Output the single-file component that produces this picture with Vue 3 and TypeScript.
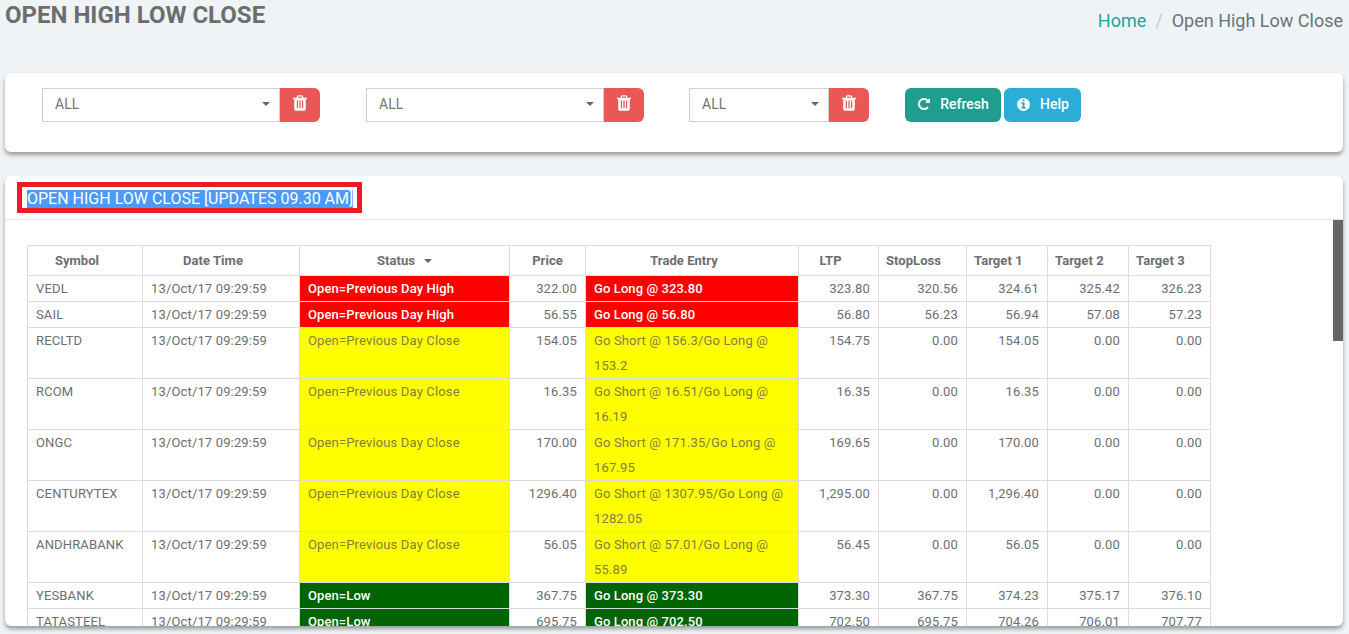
<script setup lang="ts">
interface Row {
  symbol: string
  status: string
  price: string
  entry: string
  ltp: string
  sl: string
  t1: string
  t2: string
  t3: string
  tone: 'red' | 'yellow' | 'green'
}

const time = '13/Oct/17 09:29:59'
const columns = [
  { label: 'Symbol', cls: 'center spare' },
  { label: 'Date Time', cls: 'center spare' },
  { label: 'Status', cls: 'center', sorted: true },
  { label: 'Price', cls: 'center' },
  { label: 'Trade Entry', cls: 'center spare' },
  { label: 'LTP', cls: 'center spare' },
  { label: 'StopLoss', cls: '' },
  { label: 'Target 1', cls: '' },
  { label: 'Target 2', cls: '' },
  { label: 'Target 3', cls: '' },
]
const rows: Row[] = [
  { symbol: 'VEDL', status: 'Open=Previous Day High', price: '322.00', entry: 'Go Long @ 323.80', ltp: '323.80', sl: '320.56', t1: '324.61', t2: '325.42', t3: '326.23', tone: 'red' },
  { symbol: 'SAIL', status: 'Open=Previous Day High', price: '56.55', entry: 'Go Long @ 56.80', ltp: '56.80', sl: '56.23', t1: '56.94', t2: '57.08', t3: '57.23', tone: 'red' },
  { symbol: 'RECLTD', status: 'Open=Previous Day Close', price: '154.05', entry: 'Go Short @ 156.3/Go Long @ 153.2', ltp: '154.75', sl: '0.00', t1: '154.05', t2: '0.00', t3: '0.00', tone: 'yellow' },
  { symbol: 'RCOM', status: 'Open=Previous Day Close', price: '16.35', entry: 'Go Short @ 16.51/Go Long @ 16.19', ltp: '16.35', sl: '0.00', t1: '16.35', t2: '0.00', t3: '0.00', tone: 'yellow' },
  { symbol: 'ONGC', status: 'Open=Previous Day Close', price: '170.00', entry: 'Go Short @ 171.35/Go Long @ 167.95', ltp: '169.65', sl: '0.00', t1: '170.00', t2: '0.00', t3: '0.00', tone: 'yellow' },
  { symbol: 'CENTURYTEX', status: 'Open=Previous Day Close', price: '1296.40', entry: 'Go Short @ 1307.95/Go Long @ 1282.05', ltp: '1,295.00', sl: '0.00', t1: '1,296.40', t2: '0.00', t3: '0.00', tone: 'yellow' },
  { symbol: 'ANDHRABANK', status: 'Open=Previous Day Close', price: '56.05', entry: 'Go Short @ 57.01/Go Long @ 55.89', ltp: '56.45', sl: '0.00', t1: '56.05', t2: '0.00', t3: '0.00', tone: 'yellow' },
  { symbol: 'YESBANK', status: 'Open=Low', price: '367.75', entry: 'Go Long @ 373.30', ltp: '373.30', sl: '367.75', t1: '374.23', t2: '375.17', t3: '376.10', tone: 'green' },
  { symbol: 'TATASTEEL', status: 'Open=Low', price: '695.75', entry: 'Go Long @ 702.50', ltp: '702.50', sl: '695.75', t1: '704.26', t2: '706.01', t3: '707.77', tone: 'green' },
]
const filters = ['wide first', 'wide', 'narrow']
const trash = 'M704 1376v-704q0-14-9-23t-23-9h-64q-14 0-23 9t-9 23v704q0 14 9 23t23 9h64q14 0 23-9t9-23zm256 0v-704q0-14-9-23t-23-9h-64q-14 0-23 9t-9 23v704q0 14 9 23t23 9h64q14 0 23-9t9-23zm256 0v-704q0-14-9-23t-23-9h-64q-14 0-23 9t-9 23v704q0 14 9 23t23 9h64q14 0 23-9t9-23zm-544-992h448l-48-117q-7-9-17-11h-317q-10 2-17 11zm928 32v64q0 14-9 23t-23 9h-96v948q0 83-47 143.500t-113 60.500h-832q-66 0-113-58.500t-47-141.500v-952h-96q-14 0-23-9t-9-23v-64q0-14 9-23t23-9h309l70-167q15-37 54-63t79-26h320q40 0 79 26t54 63l70 167h309q14 0 23 9t9 23z'
</script>

<template>
  <div class="page">
    <header class="top">
      <h1 class="title">OPEN HIGH LOW CLOSE</h1>
      <nav class="crumbs">
        <a class="home">Home</a>
        <span class="sep">/</span>
        <span>Open High Low Close</span>
      </nav>
    </header>

    <section class="card filters">
      <div v-for="(f, i) in filters" :key="i" class="group" :class="f">
        <div class="select">
          <span>ALL</span>
          <i class="caret"></i>
        </div>
        <button class="btn del" type="button" aria-label="Clear">
          <svg viewBox="0 0 1792 1792" width="18" height="18"><path fill="currentColor" :d="trash" /></svg>
        </button>
      </div>
      <div class="actions">
        <button class="btn refresh" type="button">
          <svg viewBox="0 0 1792 1792" width="14" height="14"><path fill="currentColor" d="M1664 256v448q0 26-19 45t-45 19h-448q-42 0-59-40-17-39 14-69l138-138q-148-137-349-137-104 0-198.500 40.500t-163.500 109.500-109.500 163.500-40.500 198.500 40.500 198.500 109.500 163.500 163.500 109.500 198.500 40.500q119 0 225-52t179-147q7-10 23-12 15 0 25 9l137 138q9 8 9.500 20.500t-7.500 22.500q-109 132-264 204.500t-327 72.500q-156 0-298-61t-245-164-164-245-61-298 61-298 164-245 245-164 298-61q147 0 284.500 55.500t244.500 156.500l130-129q29-31 70-14 39 17 39 59z" /></svg>
          Refresh
        </button>
        <button class="btn help" type="button">
          <svg viewBox="0 0 1792 1792" width="15" height="15"><path fill="currentColor" d="M1152 1376v-160q0-14-9-23t-23-9h-96v-512q0-14-9-23t-23-9h-320q-14 0-23 9t-9 23v160q0 14 9 23t23 9h96v320h-96q-14 0-23 9t-9 23v160q0 14 9 23t23 9h448q14 0 23-9t9-23zm-128-896v-160q0-14-9-23t-23-9h-192q-14 0-23 9t-9 23v160q0 14 9 23t23 9h192q14 0 23-9t9-23zm640 416q0 209-103 385.500t-279.500 279.500-385.500 103-385.500-103-279.500-279.500-103-385.500 103-385.500 279.500-279.500 385.500-103 385.500 103 279.500 279.500 103 385.500z" /></svg>
          Help
        </button>
      </div>
    </section>

    <section class="card results">
      <div class="head">
        <div class="marker"><span class="selected">OPEN HIGH LOW CLOSE [UPDATES 09.30 AM]</span></div>
      </div>
      <div class="body">
        <table class="grid">
          <colgroup>
            <col class="c1" /><col class="c2" /><col class="c3" /><col class="c4" /><col class="c5" />
            <col class="c6" /><col class="c7" /><col class="c8" /><col class="c9" /><col class="c10" />
          </colgroup>
          <thead>
            <tr>
              <th v-for="c in columns" :key="c.label" :class="c.cls">
                {{ c.label }}<i v-if="c.sorted" class="caret sort"></i>
              </th>
            </tr>
          </thead>
          <tbody>
            <tr v-for="r in rows" :key="r.symbol">
              <td>{{ r.symbol }}</td>
              <td>{{ time }}</td>
              <td :class="r.tone">{{ r.status }}</td>
              <td class="num">{{ r.price }}</td>
              <td :class="r.tone">{{ r.entry }}</td>
              <td class="num">{{ r.ltp }}</td>
              <td class="num">{{ r.sl }}</td>
              <td class="num">{{ r.t1 }}</td>
              <td class="num">{{ r.t2 }}</td>
              <td class="num">{{ r.t3 }}</td>
            </tr>
          </tbody>
        </table>
        <div class="thumb"></div>
      </div>
    </section>
  </div>
</template>

<style>
html, body { margin: 0; background: #eff3f5; overflow: hidden; }
</style>

<style scoped>
.page {
  height: 634px;
  box-sizing: border-box;
  padding: 0 6px 0 5px;
  overflow: hidden;
  font-family: Roboto, "Liberation Sans", sans-serif;
  font-size: 13px;
  color: #6c6e70;
  background: #eff3f5;
}
.top {
  height: 73px;
  display: flex;
  justify-content: space-between;
  align-items: flex-start;
}
.title {
  margin: 0;
  font-size: 24px;
  line-height: 30px;
  font-weight: 700;
  color: #6b6d6f;
}
.crumbs {
  display: flex;
  gap: 9px;
  margin-top: 9px;
  font-size: 18px;
  line-height: 24px;
  color: #67757c;
}
.home { color: #20a595; }
.sep { color: #c5cbce; }
.card {
  background: #fff;
  border-radius: 6px;
  box-shadow: 0 3px 4px rgba(0, 0, 0, 0.36);
}
.filters {
  height: 79px;
  box-sizing: border-box;
  padding: 15px 0 0 37px;
  display: flex;
  align-items: flex-start;
  margin-bottom: 24px;
}
.group {
  display: flex;
  height: 34px;
  margin-right: 45px;
}
.group.first { margin-right: 46px; }
.group.wide { width: 278px; }
.group.narrow { width: 180px; margin-right: 36px; }
.select {
  flex: 1;
  box-sizing: border-box;
  border: 1px solid #cfcfcf;
  padding: 0 12px 2px;
  display: flex;
  align-items: center;
  justify-content: space-between;
  font-size: 14px;
  color: #757575;
}
.caret {
  display: inline-block;
  width: 0;
  height: 0;
  border-left: 4px solid transparent;
  border-right: 4px solid transparent;
  border-top: 4px solid #666;
  margin-right: -3px;
}
.caret.sort { margin: 0 0 2px 9px; vertical-align: middle; }
.btn {
  border: 0;
  height: 34px;
  padding: 0 0 2px;
  color: #fff;
  font-family: inherit;
  font-size: 14px;
  font-weight: 500;
  display: flex;
  align-items: center;
  justify-content: center;
  border-radius: 0 6px 6px 0;
}
.del {
  width: 40px;
  background: #e95757;
  padding-bottom: 5px;
}
.actions { display: flex; gap: 3px; }
.refresh, .help { border-radius: 6px; gap: 9px; }
.refresh { width: 96px; background: #1f9e8f; }
.help { width: 77px; background: #2cadd5; }
.results {
  height: 450px;
  overflow: hidden;
}
.head {
  height: 44px;
  box-sizing: border-box;
  border-bottom: 1px solid #e4e6e8;
  padding: 6px 0 0 12px;
}
.marker {
  display: inline-block;
  box-sizing: border-box;
  height: 31px;
  border: 5px solid #ed1c24;
  padding: 3px 4px 0 5px;
  line-height: 18px;
  font-size: 16px;
  background: #fff;
  white-space: nowrap;
}
.selected {
  display: inline-block;
  height: 18px;
  background: #4a9aff;
  color: #fff;
}
.body {
  position: relative;
  height: 406px;
  padding: 25px 0 0 22px;
  box-sizing: border-box;
  overflow: hidden;
}
.grid {
  table-layout: fixed;
  border-collapse: collapse;
  width: 1183px;
}
.c1 { width: 115px; }
.c2 { width: 157px; }
.c3 { width: 210px; }
.c4 { width: 76px; }
.c5 { width: 213px; }
.c6 { width: 80px; }
.c7 { width: 88px; }
.c8 { width: 81px; }
.c9 { width: 81px; }
.c10 { width: 82px; }
th, td {
  border: 1px solid #dcdcdc;
  padding: 0 8px;
  line-height: 25px;
  vertical-align: top;
  text-align: left;
  letter-spacing: 0.15px;
}
th {
  height: 29px;
  vertical-align: middle;
  font-weight: 700;
  letter-spacing: 0.05px;
  padding-left: 7px;
}
th.center { text-align: center; padding-left: 8px; }
th.spare { padding-right: 24px; }
.num { text-align: right; }
.red { background: #ff0000; color: #fff; font-weight: 500; letter-spacing: 0.1px; }
.yellow { background: #ffff00; color: #808040; }
.green { background: #006400; color: #fff; font-weight: 500; letter-spacing: 0.1px; }
.thumb {
  position: absolute;
  right: 0;
  top: 0;
  width: 10px;
  height: 121px;
  background: #666;
}
</style>
